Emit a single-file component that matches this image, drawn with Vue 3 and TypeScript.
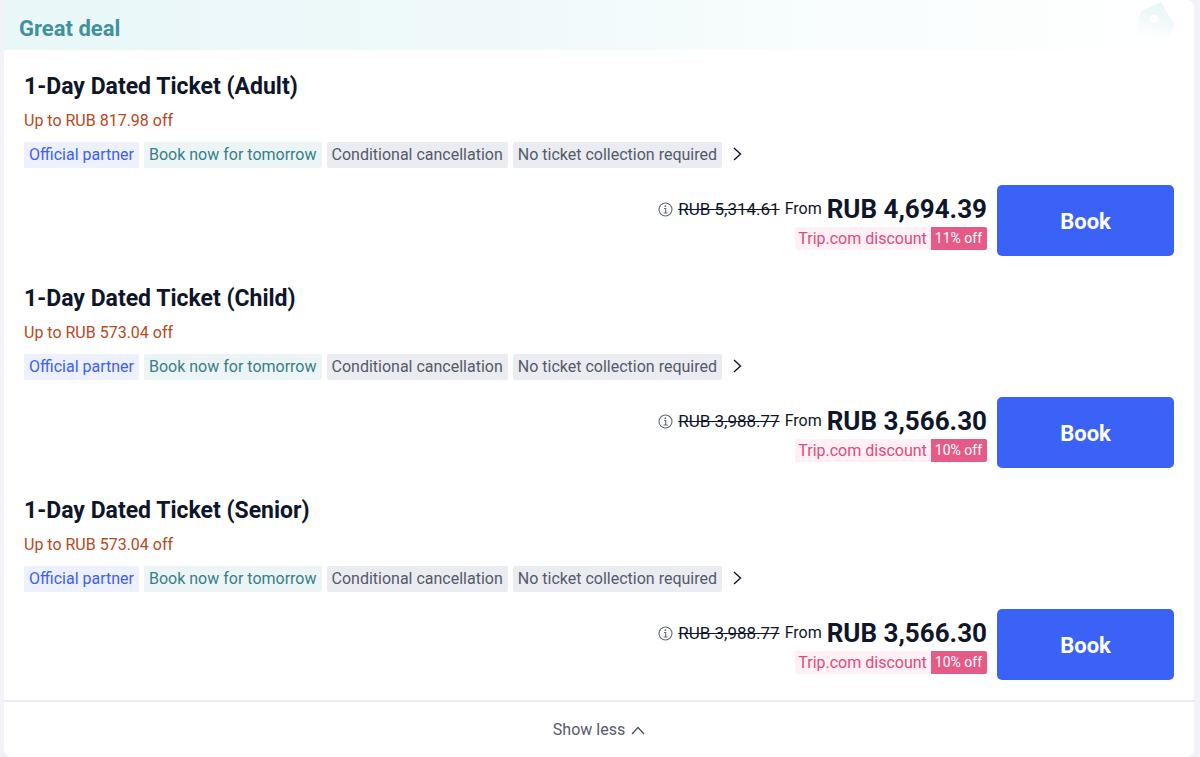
<script setup lang="ts">
interface Ticket {
  name: string
  saving: string
  original: string
  price: string
  discount: string
}

const tickets: Ticket[] = [
  { name: '1-Day Dated Ticket (Adult)', saving: 'Up to RUB 817.98 off', original: 'RUB 5,314.61', price: 'RUB 4,694.39', discount: '11% off' },
  { name: '1-Day Dated Ticket (Child)', saving: 'Up to RUB 573.04 off', original: 'RUB 3,988.77', price: 'RUB 3,566.30', discount: '10% off' },
  { name: '1-Day Dated Ticket (Senior)', saving: 'Up to RUB 573.04 off', original: 'RUB 3,988.77', price: 'RUB 3,566.30', discount: '10% off' },
]

const tags = [
  { text: 'Official partner', tone: 'blue' },
  { text: 'Book now for tomorrow', tone: 'teal' },
  { text: 'Conditional cancellation', tone: 'grey' },
  { text: 'No ticket collection required', tone: 'grey' },
]
</script>

<template>
  <main class="card">
    <header class="banner">
      <h2 class="banner-title">Great deal</h2>
      <svg class="emblem" width="42" height="46" viewBox="0 0 42 46" aria-hidden="true">
        <defs>
          <linearGradient id="emblemFade" x1="0.6" y1="0" x2="0.4" y2="1">
            <stop offset="0" stop-color="#e8f5f7" />
            <stop offset="0.5" stop-color="#f2fafb" />
            <stop offset="1" stop-color="#ffffff" stop-opacity="0" />
          </linearGradient>
        </defs>
        <path d="M8 9 26 1Q28 0 29 2L41 22 34 42 2 36Z" fill="url(#emblemFade)" />
        <circle cx="21" cy="17" r="4" fill="#fff" />
      </svg>
    </header>

    <section class="tickets">
      <article v-for="ticket in tickets" :key="ticket.name" class="ticket">
        <h3 class="name">{{ ticket.name }}</h3>
        <p class="saving">{{ ticket.saving }}</p>
        <div class="tags">
          <span v-for="tag in tags" :key="tag.text" class="tag" :class="tag.tone">{{ tag.text }}</span>
          <button type="button" class="more" aria-label="More details">
            <svg width="9" height="14" viewBox="0 0 9 14" aria-hidden="true">
              <path d="M1 1 7.5 7 1 13" fill="none" stroke="#0f1629" stroke-width="1.4" />
            </svg>
          </button>
        </div>
        <div class="purchase">
          <div class="pricing">
            <div class="price-line">
              <svg class="info" width="15" height="15" viewBox="0 0 15 15" aria-hidden="true">
                <circle cx="7.5" cy="7.5" r="6.5" fill="none" stroke="#606779" stroke-width="1.1" />
                <path d="M6 6.5h1.7v4.3M5.6 11h4" fill="none" stroke="#606779" stroke-width="1.1" />
                <circle cx="7.4" cy="4.2" r="0.9" fill="#606779" />
              </svg>
              <s class="original">{{ ticket.original }}</s>
              <span class="from">From</span>
              <strong class="price">{{ ticket.price }}</strong>
            </div>
            <div class="discount">
              <span class="discount-label">Trip.com discount</span>
              <span class="discount-rate">{{ ticket.discount }}</span>
            </div>
          </div>
          <button type="button" class="book">Book</button>
        </div>
      </article>
    </section>

    <footer class="footer">
      <button type="button" class="toggle">
        Show less
        <svg width="14" height="9" viewBox="0 0 14 9" aria-hidden="true">
          <path d="M1 8 7 1.5 13 8" fill="none" stroke="#455063" stroke-width="1.3" />
        </svg>
      </button>
    </footer>
  </main>
</template>

<style>
body {
  background: #f1f3f9;
}
</style>

<style scoped>
.card {
  margin: 0 6px 0 4px;
  background: #fff;
  border-radius: 8px;
  overflow: hidden;
  font-family: Roboto, "Noto Sans", sans-serif;
  font-size: 16px;
  color: #0f1629;
}

.banner {
  display: flex;
  align-items: center;
  justify-content: space-between;
  height: 50px;
  padding: 0 19px 0 15px;
  background: linear-gradient(90deg, #e9f7f8 0%, #eff9fa 40%, #f9fdfd 70%, #fff 100%);
}

.banner-title {
  margin: 0;
  padding-top: 8px;
  font-size: 22px;
  line-height: 28px;
  font-weight: 700;
  color: #40919b;
}

.emblem {
  flex: none;
}

.tickets {
  display: flex;
  flex-direction: column;
  gap: 27px;
  padding: 21px 20px 20px;
}

.name {
  margin: 0;
  font-size: 23px;
  line-height: 32px;
  font-weight: 700;
}

.saving {
  margin: 6px 0 9px;
  line-height: 24px;
  color: #b8481d;
}

.tags {
  display: flex;
  align-items: center;
  gap: 5px;
}

.tag {
  padding: 0 5px;
  line-height: 26px;
  border-radius: 2px;
  white-space: nowrap;
}

.blue {
  background: #edf0fe;
  color: #3c60f2;
}

.teal {
  background: #edf4f6;
  color: #357f88;
}

.grey {
  background: #ebecf1;
  color: #535a6b;
}

.more {
  display: flex;
  padding: 0 6px 2px;
  border: 0;
  background: none;
  cursor: pointer;
}

.purchase {
  display: flex;
  justify-content: flex-end;
  gap: 10px;
  margin-top: 17px;
}

.pricing {
  display: flex;
  flex-direction: column;
  align-items: flex-end;
  padding-top: 8px;
}

.price-line {
  display: flex;
  align-items: center;
  gap: 5px;
  line-height: 32px;
}

.original {
  font-size: 17px;
}

.price {
  font-size: 26px;
  font-weight: 700;
}

.discount {
  display: flex;
  margin-top: 2px;
  line-height: 23px;
  border-radius: 2px;
  overflow: hidden;
}

.discount-label {
  padding: 0 4px 0 3px;
  background: #fef0f5;
  color: #df4b7b;
}

.discount-rate {
  padding: 0 5px 0 4px;
  background: #e65a86;
  color: #fff;
  font-size: 14px;
}

.book {
  width: 177px;
  height: 71px;
  padding: 2px 0 0;
  border: 0;
  border-radius: 5px;
  background: #3b62f6;
  color: #fff;
  font: inherit;
  font-size: 22px;
  font-weight: 700;
  cursor: pointer;
}

.footer {
  display: flex;
  justify-content: center;
  border-top: 2px solid #e9ebf1;
  padding: 14px 0 13px;
}

.toggle {
  display: flex;
  align-items: center;
  gap: 6px;
  padding: 0;
  border: 0;
  background: none;
  color: #535a6b;
  font: inherit;
  line-height: 28px;
  cursor: pointer;
}
</style>
